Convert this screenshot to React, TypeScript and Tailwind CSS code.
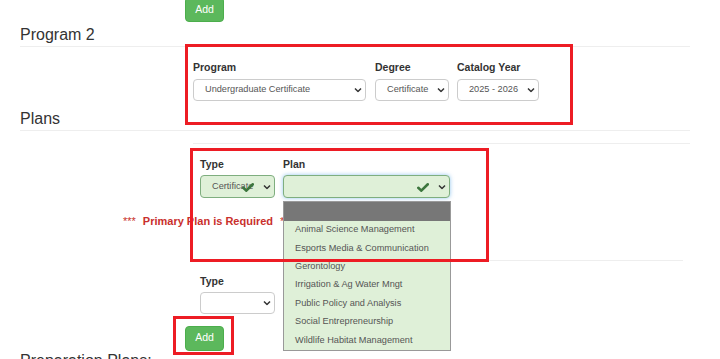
import React from 'react';

const Chevron = () => (
  <svg width="8" height="5" viewBox="0 0 8 5" className="shrink-0">
    <polyline points="1,1 4,4 7,1" fill="none" stroke="#333" strokeWidth="1.5" />
  </svg>
);

const Check = () => (
  <svg width="12" height="9" viewBox="0 0 12 9" className="shrink-0">
    <path d="M1.3 4.8 L4.3 7.6 L10.8 1.3" fill="none" stroke="#3c763d" strokeWidth="2.6" strokeLinecap="round" />
  </svg>
);

const Select: React.FC<{ text?: string; w: string; green?: boolean; focus?: boolean; checkAt?: string }> = ({
  text,
  w,
  green,
  focus,
  checkAt,
}) => (
  <div
    className={
      'relative flex items-center rounded-[4px] border pl-[11px] text-[9.2px] text-[#555] ' +
      w +
      (green ? ' bg-[#dff0d8] border-[#7fae7f]' : ' bg-white border-[#ccc]') +
      (focus ? ' shadow-[0_0_4px_rgba(102,175,233,0.7)]' : '')
    }
  >
    <span className="whitespace-nowrap">{text}</span>
    {checkAt && (
      <span className={'absolute top-[7px] ' + checkAt}>
        <Check />
      </span>
    )}
    <span className="absolute right-[3px] top-1/2 flex -translate-y-1/2">
      <Chevron />
    </span>
  </div>
);

const Label: React.FC<{ children: React.ReactNode }> = ({ children }) => (
  <div className="text-[10.5px] leading-[14px] font-bold text-[#333]">{children}</div>
);

const AddButton = () => (
  <button className="h-[25px] w-[39px] rounded-[4px] border border-[#4cae4c] bg-[#5cb85c] text-[10.5px] text-white">
    Add
  </button>
);

const options = [
  'Animal Science Management',
  'Esports Media & Communication',
  'Gerontology',
  'Irrigation & Ag Water Mngt',
  'Public Policy and Analysis',
  'Social Entrepreneurship',
  'Wildlife Habitat Management',
];

export default function App() {
  return (
    <div className="relative h-[359px] w-[720px] overflow-hidden bg-white font-['Liberation_Sans',Arial,sans-serif] text-[#333]">
      <div className="w-[690px] pl-[20px]">
        <div className="-mt-[4px] pl-[165px]">
          <AddButton />
        </div>
        <h3 className="mt-[4px] border-b border-[#eee] pb-[2px] text-[16px] leading-[18px] font-normal">Program 2</h3>

        <div className="mt-[13px] flex gap-[8px] pl-[173px]">
          <div className="flex flex-col gap-[5px]">
            <Label>Program</Label>
            <Select text="Undergraduate Certificate" w="w-[173px] h-[22px]" />
          </div>
          <div className="ml-[1px] flex flex-col gap-[5px]">
            <Label>Degree</Label>
            <Select text="Certificate" w="w-[74px] h-[22px]" />
          </div>
          <div className="flex flex-col gap-[5px]">
            <Label>Catalog Year</Label>
            <Select text="2025 - 2026" w="w-[82px] h-[22px]" />
          </div>
        </div>

        <h3 className="mt-[9px] border-b border-[#eee] pb-[2px] text-[16px] leading-[18px] font-normal">Plans</h3>
        <div className="ml-[173px] mt-[12px] border-t border-[#eee]" />

        <div className="mt-[13px] flex gap-[8px] pl-[180px]">
          <div className="flex flex-col gap-[4px]">
            <Label>Type</Label>
            <Select text="Certificate" w="w-[75px] h-[23px]" green checkAt="left-[41px]" />
          </div>
          <div className="flex flex-col gap-[4px]">
            <Label>Plan</Label>
            <Select w="w-[167px] h-[23px]" green focus checkAt="left-[133px]" />
          </div>
        </div>

        <div className="ml-[103px] mt-[17px] text-[11px] leading-[13px] text-[#c9302c]">
          <span>***</span>
          <span className="ml-[7px] font-bold">Primary Plan is Required</span>
          <span className="ml-[7px]">***</span>
        </div>

        <div className="ml-[173px] mr-[7px] mt-[32px] border-t border-[#eee]" />

        <div className="mt-[13px] flex flex-col gap-[4px] pl-[180px]">
          <Label>Type</Label>
          <Select w="w-[75px] h-[22px]" />
        </div>

        <div className="mt-[10px] pl-[165px]">
          <AddButton />
        </div>

        <h3 className="mt-[1px] text-[16px] leading-[18px] font-normal">Preparation Plans:</h3>
      </div>

      {/* open plan dropdown */}
      <div className="absolute left-[283px] top-[201px] flex h-[150px] w-[168px] flex-col border border-[#999] bg-[#dff0d8] text-[9.2px] text-[#555]">
        <div className="h-[19px] shrink-0 bg-[#777]" />
        {options.map((o) => (
          <div key={o} className="flex h-[18.4px] items-center whitespace-nowrap pl-[11px]">
            {o}
          </div>
        ))}
      </div>

      {/* annotation boxes */}
      <div className="absolute left-[185px] top-[44px] h-[81px] w-[388px] border-[3px] border-[#ed1c24]" />
      <div className="absolute left-[190px] top-[148px] h-[114px] w-[299px] border-[3px] border-[#ed1c24]" />
      <div className="absolute left-[173px] top-[316px] h-[39px] w-[61px] border-[3px] border-[#ed1c24]" />
    </div>
  );
}
